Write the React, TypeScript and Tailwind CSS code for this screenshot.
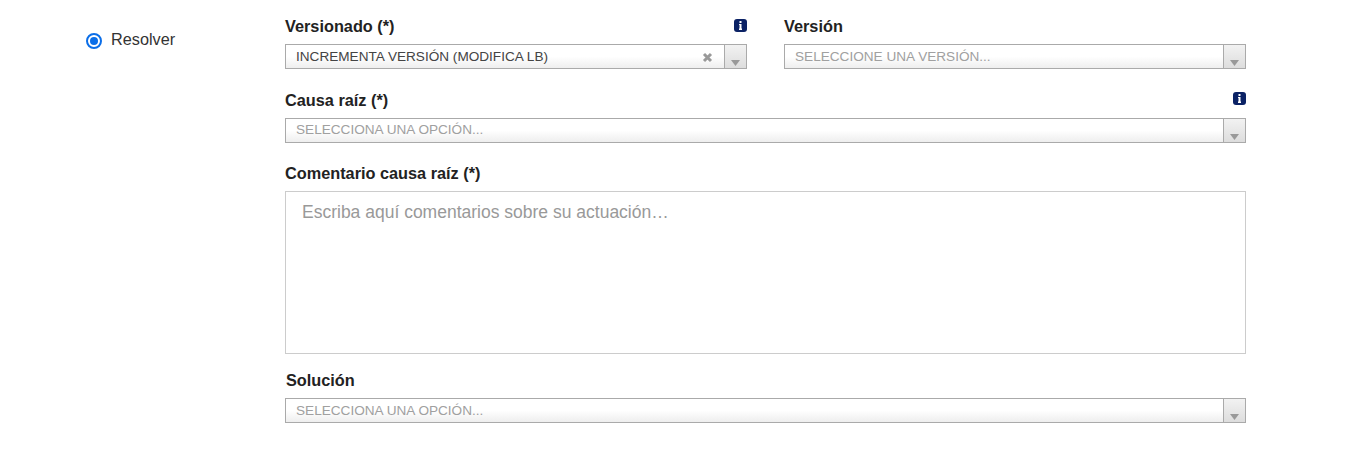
import React from 'react';

const FONT = "font-['Liberation_Sans',Arial,sans-serif]";

const InfoBadge: React.FC<{ className?: string }> = ({ className = 'mt-[2px]' }) => (
  <span className={`${className} flex h-[13px] w-[13px] items-center justify-center rounded-[3px] bg-[#0b2265]`}>
    <svg width="3" height="9" viewBox="0 0 3 9">
      <rect x="0.5" y="0" width="2" height="2" fill="#fff" />
      <rect x="0.5" y="3" width="2" height="5" fill="#fff" />
      <rect x="0" y="7.5" width="3" height="1.5" fill="#fff" />
      <rect x="0" y="3" width="1" height="1" fill="#fff" />
    </svg>
  </span>
);

interface SelectBoxProps {
  text: string;
  placeholder?: boolean;
  clearable?: boolean;
  textClass?: string;
}

const SelectBox: React.FC<SelectBoxProps> = ({ text, placeholder, clearable, textClass = 'pt-[3px]' }) => (
  <div className="flex h-[25px] w-full items-stretch border border-[#aaaaaa] bg-gradient-to-b from-white from-50% to-[#eeeeee]">
    <span className={`flex-1 truncate pl-[10px] ${textClass} text-[13.6px] leading-[17px] ${placeholder ? 'text-[#a0a0a0]' : 'text-[#444444]'}`}>
      {text}
    </span>
    {clearable && (
      <span className="flex w-[28px] items-center justify-start pl-[6px] pt-[2px]">
        <svg width="11" height="11" viewBox="0 0 11 11">
          <path d="M2 2 L9 9 M9 2 L2 9" stroke="#999999" strokeWidth="3" />
        </svg>
      </span>
    )}
    <span className="flex w-[22px] items-end justify-center border-l border-[#aaaaaa] bg-gradient-to-b from-[#f2f2f2] to-[#dddddd] pb-[2px]">
      <svg width="9" height="6" viewBox="0 0 9 6">
        <path d="M0 0 H9 L4.5 6 Z" fill="#999999" />
      </svg>
    </span>
  </div>
);

const FieldLabel: React.FC<{ text: string; info?: boolean; infoClass?: string; className?: string }> = ({ text, info, infoClass, className = '' }) => (
  <div className={`flex h-[27px] items-start justify-between ${className}`}>
    <span className="text-[16.3px] font-bold leading-[18px] text-[#222222]">{text}</span>
    {info && <InfoBadge className={infoClass} />}
  </div>
);

export default function App() {
  return (
    <div className={`${FONT} flex min-h-[457px] bg-white pl-[86px] pt-[17px]`}>
      {/* Radio */}
      <div className="flex w-[199px] items-start gap-[9px] pt-[13px]">
        <span className="mt-[3px] flex h-[16px] w-[16px] items-center justify-center rounded-full border-2 border-[#0b6ee8] bg-white">
          <span className="h-[8px] w-[8px] rounded-full bg-[#0b6ee8]" />
        </span>
        <span className="text-[16.25px] leading-[18px] text-[#333333]">Resolver</span>
      </div>

      {/* Form */}
      <div className="flex w-[961px] flex-col">
        <div className="grid grid-cols-2 gap-x-[37px]">
          <div>
            <FieldLabel text="Versionado (*)" info />
            <SelectBox text="INCREMENTA VERSIÓN (MODIFICA LB)" clearable />
          </div>
          <div>
            <FieldLabel text="Versión" />
            <SelectBox text="SELECCIONE UNA VERSIÓN..." placeholder />
          </div>
        </div>

        <div className="mt-[22px]">
          <FieldLabel text="Causa raíz (*)" info infoClass="mt-[1px]" />
          <SelectBox text="SELECCIONA UNA OPCIÓN..." placeholder textClass="pt-[2px]" />
        </div>

        <div className="mt-[21px]">
          <FieldLabel text="Comentario causa raíz (*)" />
          <div className="h-[163px] border border-[#cccccc] bg-white px-[16px] py-[9px] text-[17.5px] leading-[22px] text-[#999999]">
            Escriba aquí comentarios sobre su actuación…
          </div>
        </div>

        <div className="mt-[17px]">
          <FieldLabel text="Solución" className="pl-[1px]" />
          <SelectBox text="SELECCIONA UNA OPCIÓN..." placeholder />
        </div>
      </div>
    </div>
  );
}
